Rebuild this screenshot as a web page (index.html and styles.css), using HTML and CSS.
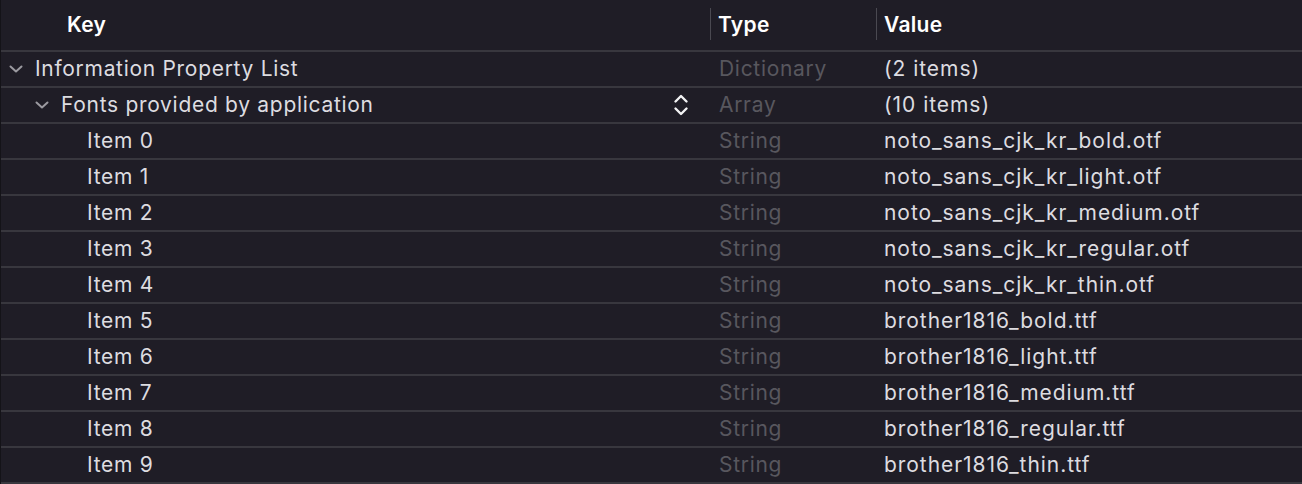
FILE: index.html
```html
<!DOCTYPE html>
<html>
<head>
<meta charset="utf-8">
<link rel="stylesheet" href="styles.css">
</head>
<body>
<div class="table">
  <div class="header">
    <div class="hcell key-h">Key</div>
    <div class="hcell type-h"><span class="divider"></span>Type</div>
    <div class="hcell value-h"><span class="divider"></span>Value</div>
  </div>
  <div class="row">
    <div class="cell key lvl0"><svg class="chev" viewBox="0 0 14 8"><path d="M1.5 1.5 L7 6.5 L12.5 1.5"/></svg>Information Property List</div>
    <div class="cell type">Dictionary</div>
    <div class="cell value">(2 items)</div>
  </div>
  <div class="row">
    <div class="cell key lvl1"><svg class="chev" viewBox="0 0 14 8"><path d="M1.5 1.5 L7 6.5 L12.5 1.5"/></svg>Fonts provided by application<svg class="updown" viewBox="0 0 16 24"><path d="M2.5 8.5 L8 3 L13.5 8.5 M2.5 15.5 L8 21 L13.5 15.5"/></svg></div>
    <div class="cell type">Array</div>
    <div class="cell value">(10 items)</div>
  </div>
  <div class="row"><div class="cell key lvl2">Item 0</div><div class="cell type">String</div><div class="cell value">noto_sans_cjk_kr_bold.otf</div></div>
  <div class="row"><div class="cell key lvl2">Item 1</div><div class="cell type">String</div><div class="cell value">noto_sans_cjk_kr_light.otf</div></div>
  <div class="row"><div class="cell key lvl2">Item 2</div><div class="cell type">String</div><div class="cell value">noto_sans_cjk_kr_medium.otf</div></div>
  <div class="row"><div class="cell key lvl2">Item 3</div><div class="cell type">String</div><div class="cell value">noto_sans_cjk_kr_regular.otf</div></div>
  <div class="row"><div class="cell key lvl2">Item 4</div><div class="cell type">String</div><div class="cell value">noto_sans_cjk_kr_thin.otf</div></div>
  <div class="row"><div class="cell key lvl2">Item 5</div><div class="cell type">String</div><div class="cell value">brother1816_bold.ttf</div></div>
  <div class="row"><div class="cell key lvl2">Item 6</div><div class="cell type">String</div><div class="cell value">brother1816_light.ttf</div></div>
  <div class="row"><div class="cell key lvl2">Item 7</div><div class="cell type">String</div><div class="cell value">brother1816_medium.ttf</div></div>
  <div class="row"><div class="cell key lvl2">Item 8</div><div class="cell type">String</div><div class="cell value">brother1816_regular.ttf</div></div>
  <div class="row"><div class="cell key lvl2">Item 9</div><div class="cell type">String</div><div class="cell value">brother1816_thin.ttf</div></div>
</div>
</body>
</html>
```
FILE: styles.css
```css
html, body {
  margin: 0;
  padding: 0;
  background: #1f1d26;
}
body {
  width: 1302px;
  height: 484px;
  overflow: hidden;
  font-family: Inter, "Liberation Sans", sans-serif;
  font-size: 21px;
  letter-spacing: 0.7px;
  color: #dddce0;
}
.table {
  border-left: 1px solid #141318;
  height: 484px;
  box-sizing: border-box;
}
.header {
  display: grid;
  grid-template-columns: 709px 166px 1fr;
  height: 50px;
  align-items: center;
  border-bottom: 2px solid #38373e;
  box-sizing: content-box;
}
.hcell {
  font-weight: 600;
  color: #ffffff;
  position: relative;
  height: 50px;
  line-height: 50px;
  letter-spacing: 0.3px;
}
.key-h { padding-left: 66px; }
.type-h, .value-h { padding-left: 8px; }
.divider {
  position: absolute;
  left: 0;
  top: 8px;
  width: 1px;
  height: 32px;
  background: #4a4951;
}
.row {
  display: grid;
  grid-template-columns: 709px 166px 1fr;
  height: 34px;
  border-bottom: 2px solid #38373e;
  align-items: center;
}
.cell {
  white-space: nowrap;
  display: flex;
  align-items: center;
  height: 34px;
  padding-bottom: 2px;
  box-sizing: border-box;
}
.lvl0 { padding-left: 8px; }
.lvl1 { padding-left: 34px; }
.lvl2 { padding-left: 86px; }
.chev {
  width: 14px;
  height: 8px;
  margin-right: 12px;
  margin-top: 2px;
  fill: none;
  stroke: #9b9aa0;
  stroke-width: 2;
  stroke-linecap: round;
  stroke-linejoin: round;
}
.updown {
  width: 16px;
  height: 24px;
  margin-left: auto;
  margin-right: 21px;
  margin-top: 2px;
  fill: none;
  stroke: #f2f2f4;
  stroke-width: 2.4;
  stroke-linecap: round;
  stroke-linejoin: round;
}
.type {
  padding-left: 9px;
  color: #58575e;
}
.value {
  padding-left: 8px;
  letter-spacing: 0.95px;
  color: #dddce0;
}
```
